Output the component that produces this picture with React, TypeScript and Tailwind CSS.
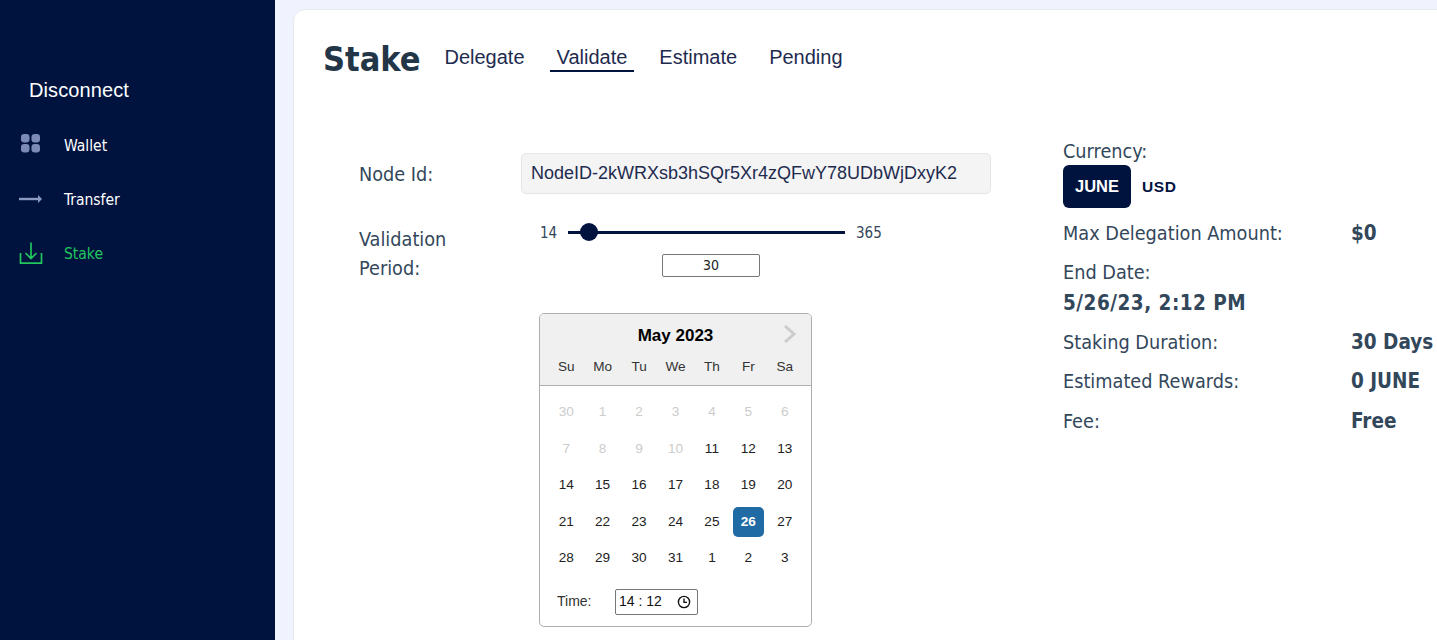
const bodyFont = "font-['DejaVu_Sans_Condensed','DejaVu_Sans',sans-serif]"

const GridIcon = () => (
  <svg width="24" height="24" viewBox="0 0 24 24" fill="#7b8bb5">
    <rect x="2" y="0" width="8.5" height="8.5" rx="3.2" />
    <rect x="12.5" y="0" width="8.5" height="8.5" rx="3.2" />
    <rect x="2" y="10" width="8.5" height="8.5" rx="3.2" />
    <rect x="12.5" y="10" width="8.5" height="8.5" rx="3.2" />
  </svg>
)

const ArrowIcon = () => (
  <svg width="24" height="24" viewBox="0 0 24 24" fill="none">
    <path d="M0 11h20" stroke="#8a99c0" strokeWidth="2.4" />
    <path d="M19 7 23 11l-4 4z" fill="#8a99c0" />
  </svg>
)

const TrayIcon = () => (
  <svg width="24" height="24" viewBox="0 0 24 24" fill="none" stroke="#22c55e" strokeWidth="1.7">
    <path d="M1.5 11v10.2h21V11" />
    <path d="M12 .5v15.5M6.5 11l5.5 5.5 5.5-5.5" />
  </svg>
)

const ClockIcon = () => (
  <svg width="14" height="14" viewBox="0 0 14 14" fill="none" stroke="#111" strokeWidth="1.4">
    <circle cx="7" cy="7" r="5.6" />
    <path d="M7 3.6V7.4H10" />
  </svg>
)

const navItems = [
  { label: 'Wallet', icon: <GridIcon />, color: 'text-white' },
  { label: 'Transfer', icon: <ArrowIcon />, color: 'text-white' },
  { label: 'Stake', icon: <TrayIcon />, color: 'text-[#22c55e]' },
]

const tabs = ['Delegate', 'Validate', 'Estimate', 'Pending']
const weekdays = ['Su', 'Mo', 'Tu', 'We', 'Th', 'Fr', 'Sa']

const calendarDays = [
  ...[30, 1, 2, 3, 4, 5, 6, 7, 8, 9, 10].map(d => ({ d, off: true })),
  ...[11, 12, 13, 14, 15, 16, 17, 18, 19, 20, 21, 22, 23, 24, 25, 26, 27, 28, 29, 30, 31, 1, 2, 3].map(d => ({ d, off: false })),
]

const Calendar = () => (
  <div className="w-[273px] h-[314px] rounded-[5px] border border-[#aeaeae] bg-white font-['Liberation_Sans',sans-serif] overflow-hidden">
    <div className="h-[72px] bg-[#f0f0f0] border-b border-[#aeaeae] px-2">
      <div className="relative h-[45px] pb-[2px] flex items-center justify-center text-[17px] font-bold text-black">
        May 2023
        <svg className="absolute right-[6px] top-[10px]" width="14" height="20" viewBox="0 0 14 20" fill="none" stroke="#ccc" strokeWidth="3">
          <path d="M2 2l9 8-9 8" />
        </svg>
      </div>
      <div className="grid grid-cols-7 text-center text-[13.6px] leading-[16px] text-[#333]">
        {weekdays.map(w => <span key={w}>{w}</span>)}
      </div>
    </div>
    <div className="grid grid-cols-7 auto-rows-[36.5px] px-2 pt-[8px] text-[13.6px] text-center">
      {calendarDays.map((c, i) => (
        <div key={i} className="flex items-center justify-center">
          {i === 26 ? (
            <span className="w-[31px] h-[30px] rounded-[5px] bg-[#216ba5] text-white font-bold flex items-center justify-center">{c.d}</span>
          ) : (
            <span className={c.off ? 'text-[#ccc]' : 'text-[#222]'}>{c.d}</span>
          )}
        </div>
      ))}
    </div>
    <div className="flex items-center pl-[17px] mt-[12px] text-[14px] text-[#333]">
      <span className="w-[58px]">Time:</span>
      <div className="w-[83px] h-[26px] border border-[#767676] rounded-[2px] flex items-center justify-between pl-[3px] pr-[6px] text-[14px] text-[#111]">
        <span>14 : 12</span>
        <ClockIcon />
      </div>
    </div>
  </div>
)

const SummaryRow = ({ label, value }: { label: string; value: string }) => (
  <div className="flex h-[39px] items-center">
    <span className="w-[288px] shrink-0">{label}</span>
    <span className="font-bold text-[20.5px]">{value}</span>
  </div>
)

export default function App() {
  return (
    <div className="flex w-[1437px] h-[640px] overflow-hidden bg-[#f0f2fd]">
      <aside className="w-[275px] shrink-0 bg-[#00133f] pt-[77px]">
        <div className="pl-[29px] text-[20px] leading-[26px] tracking-[0.1px] text-white font-['Liberation_Sans',sans-serif]">Disconnect</div>
        <nav className="mt-[16px] flex flex-col">
          {navItems.map(n => (
            <div key={n.label} className="flex h-[54px] items-center pl-[19px]">
              {n.icon}
              <span className={`ml-[21px] mt-[2px] text-[15.5px] ${bodyFont} ${n.color}`}>{n.label}</span>
            </div>
          ))}
        </nav>
      </aside>

      <main className="flex-1 pl-[18px] pt-[9px]">
        <div className="w-[1200px] h-[700px] rounded-[12px] bg-white border border-[#e6e8f0] pl-[29px] pt-[27px]">
          <div className="flex items-start gap-[17px]">
            <h1 className={`text-[34px] leading-[44px] font-bold text-[#233648] ${bodyFont}`}>Stake</h1>
            <div className="flex gap-[18px] font-['Liberation_Sans',sans-serif] text-[20px] text-[#1e2b4f]">
              {tabs.map(t => (
                <div key={t} className={`px-[7px] h-[26px] leading-[26px] pt-[7px] box-content ${t === 'Validate' ? 'border-b-2 border-[#00133f]' : ''}`}>{t}</div>
              ))}
            </div>
          </div>

          <div className={`flex mt-[72px] text-[19.7px] text-[#33475b] ${bodyFont}`}>
            <div className="pl-[36px] w-[740px] shrink-0">
              <div className="flex items-center h-[41px]">
                <span className="w-[162px] shrink-0 pt-[2px]">Node Id:</span>
                <div className="w-[470px] h-[41px] rounded-[5px] border border-[#e5e5e5] bg-[#f4f4f4] flex items-center pl-[9px] text-[18px] text-[#1e2b4f] font-['Liberation_Sans',sans-serif]">
                  NodeID-2kWRXsb3hSQr5Xr4zQFwY78UDbWjDxyK2
                </div>
              </div>
              <div className="flex mt-[27px]">
                <div className="w-[162px] shrink-0 leading-[29px] pt-[4px]">Validation<br />Period:</div>
                <div className="relative w-[342px] ml-[19px]">
                  <div className="flex items-center h-[22px] text-[15px] text-[#33475b]">
                    <span className="w-[28px] pt-[2px]">14</span>
                    <div className="relative w-[277px] h-[3px] bg-[#00133f]">
                      <span className="absolute left-[12px] top-[-8px] w-[18px] h-[18px] rounded-full bg-[#00133f]" />
                    </div>
                    <span className="ml-[11px] pt-[2px]">365</span>
                  </div>
                  <div className="mt-[11px] ml-[122px] w-[98px] h-[23px] border border-[#767676] rounded-[2px] flex items-center justify-center text-[14px] text-[#222]">30</div>
                </div>
              </div>
              <div className="mt-[30px] ml-[180px]">
                <Calendar />
              </div>
            </div>

            <div className="-mt-[17px]">
              <div className="h-[29px] leading-[31px]">Currency:</div>
              <div className="flex items-center font-['Liberation_Sans',sans-serif] text-[16.5px] font-bold text-[#00133f]">
                <span className="w-[68px] h-[43px] rounded-[6px] bg-[#00133f] text-white flex items-center justify-center">JUNE</span>
                <span className="ml-[11px] text-[15.5px] tracking-[0.6px]">USD</span>
              </div>
              <div className="mt-[6px]">
                <SummaryRow label="Max Delegation Amount:" value="$0" />
                <div className="h-[31px] leading-[31px] mt-[4px]">End Date:</div>
                <div className="h-[31px] leading-[31px] font-bold text-[20.5px] tracking-[0.5px]">5/26/23, 2:12 PM</div>
                <div className="mt-[4px]">
                  <SummaryRow label="Staking Duration:" value="30 Days" />
                  <SummaryRow label="Estimated Rewards:" value="0 JUNE" />
                  <div className="mt-[1px]">
                    <SummaryRow label="Fee:" value="Free" />
                  </div>
                </div>
              </div>
            </div>
          </div>
        </div>
      </main>
    </div>
  )
}
